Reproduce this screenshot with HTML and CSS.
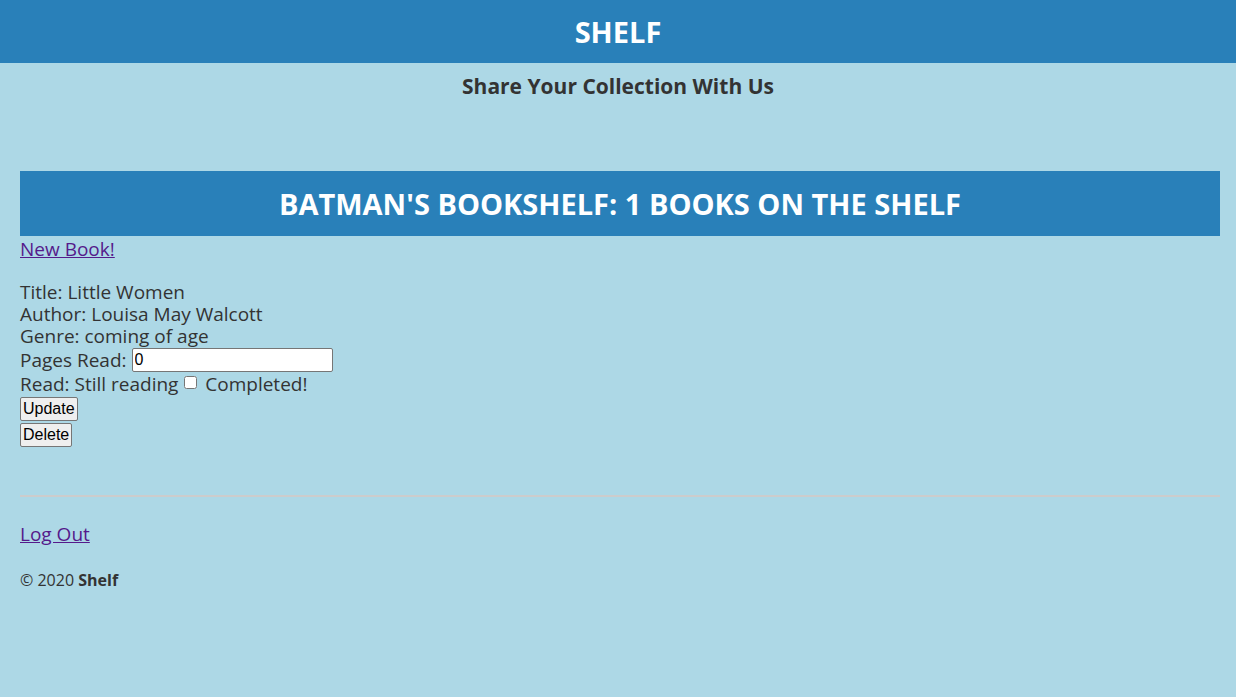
FILE: index.html
```html
<!DOCTYPE html>
<html>
<head>
<meta charset="utf-8">
<title>Shelf</title>
<link rel="stylesheet" href="styles.css">
</head>
<body>
<header class="site-header">
  <h1 class="site-title">SHELF</h1>
</header>
<h3 class="tagline">Share Your Collection With Us</h3>
<main class="content">
  <h2 class="shelf-banner">BATMAN'S BOOKSHELF: 1 BOOKS ON THE SHELF</h2>
  <a class="link" href="#">New Book!</a>
  <div class="book">
    <div class="line">Title: Little Women</div>
    <div class="line">Author: Louisa May Walcott</div>
    <div class="line">Genre: coming of age</div>
    <form class="book-form">
      <div class="line pages">Pages Read: <input class="pages-input" type="text" value="0"></div>
      <div class="line read">Read: Still reading <input class="check" type="checkbox"> Completed!</div>
      <div class="btn-row"><button class="btn" type="button">Update</button></div>
    </form>
    <div class="btn-row"><button class="btn" type="button">Delete</button></div>
  </div>
  <hr class="rule">
  <a class="link logout" href="#">Log Out</a>
  <footer class="footer">© 2020 <b>Shelf</b></footer>
</main>
</body>
</html>
```
FILE: styles.css
```css
html, body {
  margin: 0;
  padding: 0;
}
body {
  background: #add8e6;
  color: #333333;
  font-family: "Open Sans", "Noto Sans", sans-serif;
  font-size: 19px;
  min-height: 697px;
}
.site-header {
  background: #2980b9;
  height: 63px;
  display: flex;
  align-items: center;
  justify-content: center;
}
.site-title {
  margin: 0;
  color: #ffffff;
  font-size: 29px;
  font-weight: 700;
}
.tagline {
  margin: 10px 0 0;
  text-align: center;
  font-size: 21px;
  font-weight: 700;
  line-height: 26px;
}
.content {
  padding: 0 16px 0 20px;
}
.shelf-banner {
  margin: 72px 0 0;
  background: #2980b9;
  color: #ffffff;
  height: 65px;
  display: flex;
  align-items: center;
  justify-content: center;
  font-size: 29px;
  font-weight: 700;
}
.link {
  color: #551a8b;
  font-size: 19px;
  line-height: 24px;
  display: inline-block;
}
.book {
  margin-top: 19px;
  line-height: 22px;
}
.book-form {
  margin: 0;
}
.pages {
  margin-top: 1px;
  line-height: 24px;
  display: flex;
  align-items: center;
  gap: 5px;
}
.pages-input {
  box-sizing: border-box;
  width: 201px;
  height: 24px;
  padding: 0 2px;
  margin: 0;
  font-family: "Liberation Sans", Arial, sans-serif;
  font-size: 16px;
  border: 1px solid #767676;
  border-radius: 2px;
  background: #ffffff;
  color: #000000;
}
.read {
  line-height: 25px;
}
.check {
  margin: 0 3px 0 1px;
  width: 13px;
  height: 13px;
  vertical-align: 2px;
}
.btn-row {
  line-height: 0;
  margin-bottom: 2px;
}
.btn {
  font-family: "Liberation Sans", Arial, sans-serif;
  font-size: 16px;
  height: 24px;
  padding: 0 2px;
  margin: 0;
  border: 1px solid #767676;
  border-radius: 2px;
  background: #efefef;
  color: #000000;
}
.rule {
  margin: 48px 0 0;
  border: 0;
  border-top: 2px solid #cccccc;
  height: 0;
}
.logout {
  margin-top: 25px;
}
.footer {
  margin-top: 23px;
  font-size: 16px;
  line-height: 20px;
}
```
